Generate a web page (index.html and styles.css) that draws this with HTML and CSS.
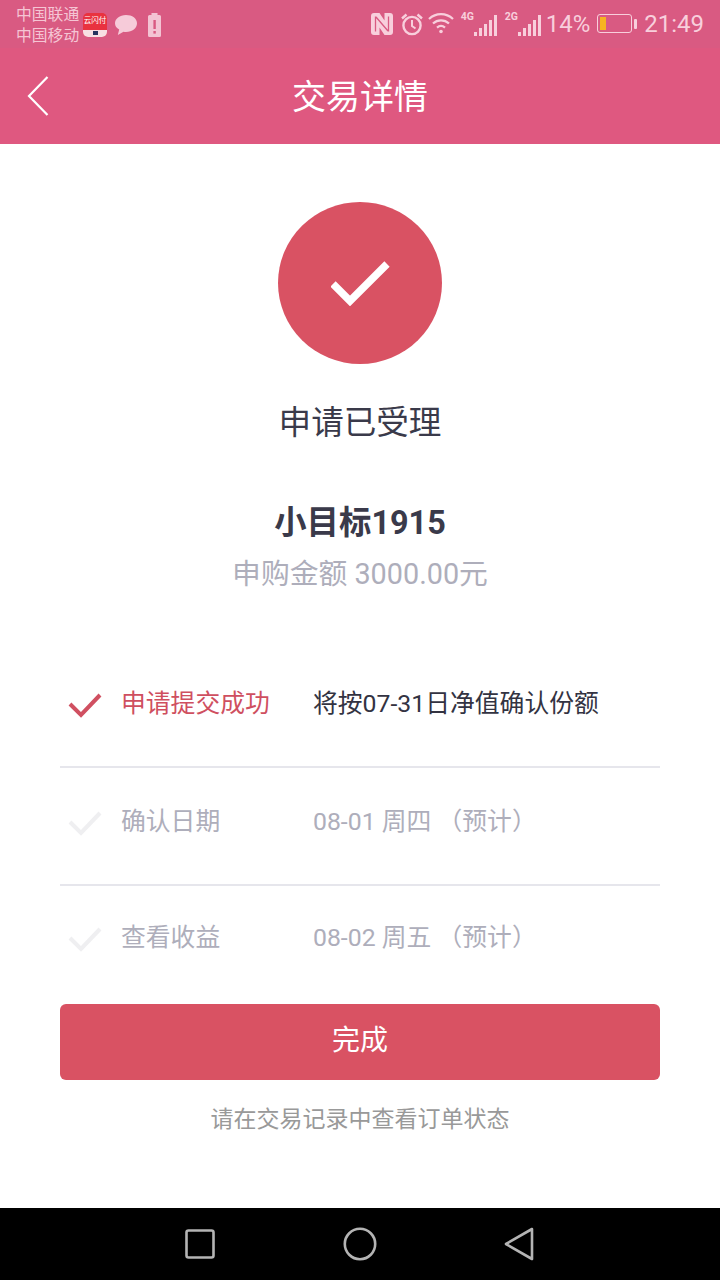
FILE: index.html
```html
<!DOCTYPE html>
<html lang="zh-CN">
<head>
<meta charset="utf-8">
<title>交易详情</title>
<link rel="stylesheet" href="styles.css">
</head>
<body>
<div class="phone">
  <div class="statusbar">
    <div class="carriers"><span>中国联通</span><span>中国移动</span></div>
    <div class="app-badge"><span class="app-badge-name">云闪付</span><span class="app-badge-foot"><i class="app-badge-mark"></i></span></div>
    <svg class="ic-chat" width="24" height="22" viewBox="0 0 24 22"><path d="M12 1C5.700 1 1 4.800 1 9.300c0 2.700 1.600 4.900 4.200 6.300L3.800 21l5.700-3.300c.8.100 1.600.2 2.500.2 6.300 0 11-3.700 11-8.600S18.300 1 12 1z" fill="#f6cbd9"/></svg>
    <svg class="ic-alert" width="13" height="24" viewBox="0 0 13 24"><path d="M3.500 0h6v2h2Q13 2 13 3.500v19Q13 24 11.500 24h-10Q0 24 0 22.500v-19Q0 2 1.500 2h2z" fill="#f3c3d3"/><rect x="5.400" y="7" width="2.400" height="9" fill="#d95a82"/><rect x="5.400" y="18" width="2.400" height="2.600" fill="#d95a82"/></svg>
    <div class="status-right">
      <svg width="22" height="22" viewBox="0 0 22 22"><path d="M3 0h5.500l5 7.500V0H19q3 0 3 3v16q0 3-3 3h-5.500l-5-7.500V22H3q-3 0-3-3V3q0-3 3-3z" fill="#f8cfdc"/><path d="M4.500 3.500v15M17.500 3.500v15M5 4l12 14" stroke="#d95a82" stroke-width="1.300" fill="none"/></svg>
      <svg class="sb-alarm" width="24" height="24" viewBox="0 0 24 24" fill="none" stroke="#f8cfdc"><circle cx="12" cy="13.500" r="8.600" stroke-width="2.400"/><path d="M12 8v6l3.500 2.500" stroke-width="2"/><path d="M2 6.500L6.500 2.500M22 6.500L17.500 2.500" stroke-width="2.400"/></svg>
      <svg class="sb-wifi" width="26" height="22" viewBox="0 0 26 22" fill="none" stroke="#f8cfdc" stroke-width="2.300"><path d="M1 7c7-6.400 17-6.400 24 0M5 11.500c4.600-4.200 11.400-4.200 16 0M9 15.600c2.400-2 5.600-2 8 0"/><circle cx="13" cy="19.500" r="1.800" fill="#f8cfdc" stroke="none"/></svg>
      <div class="sig sig-first"><span class="sig-tag">4G</span><svg width="23" height="21" viewBox="0 0 23 21" fill="#f8cfdc"><rect x="0" y="17" width="3" height="4"/><rect x="5" y="13" width="3" height="8"/><rect x="10" y="9" width="3" height="12"/><rect x="15" y="5" width="3" height="16"/><rect x="20" y="0" width="3" height="21"/></svg></div>
      <div class="sig"><span class="sig-tag">2G</span><svg width="23" height="21" viewBox="0 0 23 21" fill="#f8cfdc"><rect x="0" y="17" width="3" height="4"/><rect x="5" y="13" width="3" height="8"/><rect x="10" y="9" width="3" height="12"/><rect x="15" y="5" width="3" height="16"/><rect x="20" y="0" width="3" height="21"/></svg></div>
      <span class="sb-pct">14%</span>
      <svg class="sb-batt" width="40" height="20" viewBox="0 0 40 20"><rect x=".5" y=".5" width="34" height="18" rx="2.500" fill="none" stroke="#f8cfdc"/><rect x="3" y="3" width="6" height="13" fill="#f7b321"/><rect x="37" y="5" width="3" height="10" rx="1" fill="#f8cfdc"/></svg>
      <span class="sb-time">21:49</span>
    </div>
  </div>

  <header class="navbar">
    <svg class="nav-back" width="22" height="40" viewBox="0 0 22 40"><path d="M20.500 1L2 20l18.500 19" fill="none" stroke="#fff" stroke-width="2.200"/></svg>
    <h1 class="nav-title">交易详情</h1>
  </header>

  <main class="content">
    <div class="result-circle">
      <svg width="60" height="48" viewBox="0 0 60 48"><path d="M2 26l17 17L56 6" fill="none" stroke="#fff" stroke-width="7.500"/></svg>
    </div>
    <p class="result-text">申请已受理</p>
    <p class="product-name">小目标1915</p>
    <p class="product-amount">申购金额 3000.00元</p>

    <ul class="steps">
      <li class="step step-done">
        <svg class="step-check" width="34" height="26" viewBox="0 0 34 26"><path d="M2 12l11 11L32 3" fill="none" stroke="currentColor" stroke-width="4"/></svg>
        <span class="step-label">申请提交成功</span>
        <span class="step-value">将按07-31日净值确认份额</span>
      </li>
      <li class="step">
        <svg class="step-check" width="34" height="26" viewBox="0 0 34 26"><path d="M2 12l11 11L32 3" fill="none" stroke="currentColor" stroke-width="4"/></svg>
        <span class="step-label">确认日期</span>
        <span class="step-value">08-01 周四 （预计）</span>
      </li>
      <li class="step">
        <svg class="step-check" width="34" height="26" viewBox="0 0 34 26"><path d="M2 12l11 11L32 3" fill="none" stroke="currentColor" stroke-width="4"/></svg>
        <span class="step-label">查看收益</span>
        <span class="step-value">08-02 周五 （预计）</span>
      </li>
    </ul>

    <button class="done-btn" type="button">完成</button>
    <p class="hint">请在交易记录中查看订单状态</p>
  </main>

  <footer class="sysnav">
    <svg class="key-recent" width="30" height="30" viewBox="0 0 30 30"><rect x="1.500" y="1.500" width="27" height="27" rx="2" fill="none" stroke="#b4b4b4" stroke-width="2.600"/></svg>
    <svg width="34" height="34" viewBox="0 0 34 34"><circle cx="17" cy="17" r="15.200" fill="none" stroke="#b4b4b4" stroke-width="2.600"/></svg>
    <svg width="30" height="34" viewBox="0 0 30 34"><path d="M28 2L2 17l26 15z" fill="none" stroke="#b4b4b4" stroke-width="2.600" stroke-linejoin="round"/></svg>
  </footer>
</div>
</body>
</html>
```
FILE: styles.css
```css
* { box-sizing: border-box; }
html, body { margin: 0; padding: 0; }
body {
  background: #fff;
  font-family: Roboto, "Noto Sans CJK SC", "Noto Sans", sans-serif;
  color: #3a3a4a;
}
ul, p, h1 { margin: 0; padding: 0; }
ul { list-style: none; }

.phone {
  width: 720px;
  height: 1280px;
  display: flex;
  flex-direction: column;
  overflow: hidden;
}

/* system status strip */
.statusbar {
  height: 48px;
  background: #d95a82;
  display: flex;
  align-items: center;
  padding: 0 16px;
  color: #f8cfdc;
}
.carriers {
  display: flex;
  flex-direction: column;
  font-size: 15.800px;
  line-height: 21px;
  width: 66px;
  white-space: nowrap;
  margin-top: 2px;
  opacity: .92;
}
.app-badge {
  width: 24px;
  height: 24px;
  margin-left: 1px;
  border-radius: 5px;
  background: #e9323f;
  overflow: hidden;
  display: flex;
  flex-direction: column;
  justify-content: space-between;
  align-items: center;
  margin-top: 1px;
}
.app-badge-name {
  font-size: 7.500px;
  line-height: 10px;
  margin-top: 3px;
  color: #fff;
}
.app-badge-foot {
  width: 100%;
  height: 7px;
  background: #f7dfe3;
  display: flex;
  justify-content: center;
  align-items: center;
}
.app-badge-mark {
  width: 5px;
  height: 4px;
  background: #26335f;
}
.ic-chat { margin-left: 7px; margin-top: 2px; }
.ic-alert { margin-left: 10px; margin-top: 1px; }
.status-right {
  margin-left: auto;
  display: flex;
  align-items: center;
}
.status-right > svg { flex: none; }
.sb-alarm { margin-left: 7px; }
.sb-wifi { margin-left: 4px; margin-top: -2px; }
.sig {
  position: relative;
  width: 36px;
  height: 24px;
  display: flex;
  justify-content: flex-end;
  align-items: flex-end;
  margin-left: 8px;
}
.sig-first { margin-left: 7px; }
.sig-tag {
  position: absolute;
  left: 0;
  top: 0;
  font-size: 10.500px;
  line-height: 10px;
  font-weight: 700;
}
.sb-pct { font-size: 24px; line-height: 28px; margin-left: 5px; }
.sb-batt { margin-left: 7px; }
.sb-time { font-size: 24px; line-height: 28px; margin-left: 7px; }

/* page title bar */
.navbar {
  height: 96px;
  background: #df5880;
  display: flex;
  align-items: center;
  justify-content: center;
  position: relative;
}
.nav-back {
  position: absolute;
  left: 27px;
  top: 28px;
}
.nav-title {
  font-size: 34px;
  font-weight: 400;
  line-height: 44px;
  padding-top: 2px;
  color: #fff;
}

/* page body */
.content {
  flex: 1;
  display: flex;
  flex-direction: column;
  align-items: center;
  padding-top: 58px;
}
.result-circle {
  width: 164px;
  height: 162px;
  border-radius: 50%;
  background: #d95263;
  display: flex;
  align-items: center;
  justify-content: center;
  flex: none;
}
.result-circle svg { margin-top: -2px; margin-left: 2px; }
.result-text {
  font-size: 32.600px;
  line-height: 44px;
  margin-top: 37px;
}
.product-name {
  font-size: 32.400px;
  line-height: 44px;
  font-weight: 700;
  margin-top: 56px;
}
.product-amount {
  font-size: 28.800px;
  line-height: 40px;
  margin-top: 9px;
  color: #aeaebb;
}

.steps {
  width: 600px;
  margin-top: 68px;
}
.step {
  display: flex;
  align-items: center;
  font-size: 24.800px;
  line-height: 36px;
  color: #aeaebb;
  height: 118px;
  padding-bottom: 8px;
  border-bottom: 2px solid #e6e6ec;
  white-space: nowrap;
}
.step:first-child { height: 106px; padding-bottom: 22px; padding-top: 2px; }
.step:last-child { border-bottom: 0; height: 104px; padding-bottom: 0; }
.step-check {
  color: #efeff1;
  margin-left: 8px;
  margin-top: 2px;
  flex: none;
}
.step-label {
  margin-left: 19px;
  width: 192px;
}
.step-done .step-check { color: #d05061; }
.step-done .step-label { color: #cf4f60; }
.step-done .step-value { color: #333342; }

.done-btn {
  width: 600px;
  height: 76px;
  margin-top: 14px;
  padding: 0 0 8px;
  border: 0;
  border-radius: 6px;
  background: #d95263;
  color: #fff;
  font: inherit;
  font-size: 28px;
  flex: none;
}
.hint {
  font-size: 23px;
  line-height: 36px;
  margin-top: 22px;
  color: #999;
}

/* on-screen system keys */
.sysnav {
  height: 72px;
  background: #000;
  flex: none;
  display: flex;
  align-items: center;
  justify-content: center;
  gap: 127px;
}
.key-recent { margin-left: -1px; margin-right: 1px; }
```
